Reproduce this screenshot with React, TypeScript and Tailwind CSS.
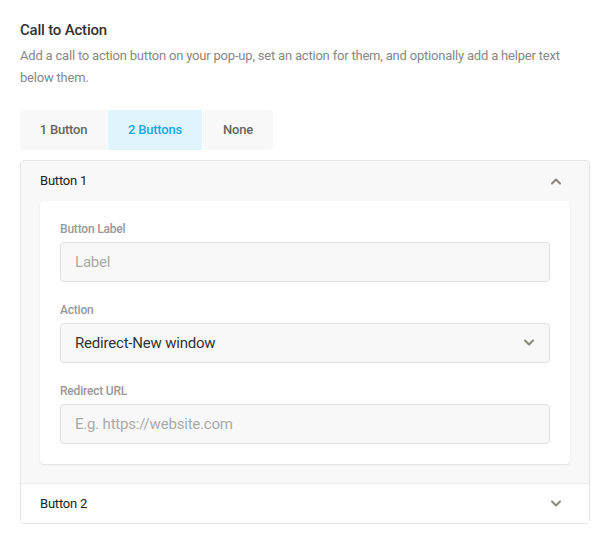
import { useState } from "react";

type Mode = "one" | "two" | "none";

const TABS: { id: Mode; label: string; w: string }[] = [
  { id: "one", label: "1 Button", w: "w-[87px]" },
  { id: "two", label: "2 Buttons", w: "w-[94px]" },
  { id: "none", label: "None", w: "w-[70px]" },
];

function Chevron({ up }: { up?: boolean }) {
  return (
    <svg width="12" height="8" viewBox="0 0 12 8" className="shrink-0">
      <polyline
        points={up ? "2,6.5 6,2.5 10,6.5" : "2,1.5 6,5.5 10,1.5"}
        fill="none"
        stroke="#8b8580"
        strokeWidth="2"
        strokeLinecap="round"
        strokeLinejoin="round"
      />
    </svg>
  );
}

function Field({ label, children }: { label: string; children: React.ReactNode }) {
  return (
    <div className="flex flex-col gap-[5px]">
      <label className="text-[12px] leading-4 font-medium text-[#999]">{label}</label>
      {children}
    </div>
  );
}

const inputCls =
  "h-10 w-full rounded-[4px] border border-[#e0e0e0] bg-[#f8f8f8] px-[14px] text-[15px] tracking-[-0.2px] text-[#333] placeholder:text-[#aaa] outline-none";

export default function App() {
  const [mode, setMode] = useState<Mode>("two");
  const [open, setOpen] = useState(1);

  return (
    <div className="min-h-[546px] bg-white px-5 pt-[19px] font-['Roboto',sans-serif] tracking-[-0.2px]">
      <h2 className="text-[15px] leading-[22px] font-medium text-[#333]">Call to Action</h2>
      <p className="mt-[4px] text-[13px] leading-[22px] text-[#888]">
        Add a call to action button on your pop-up, set an action for them, and optionally add a helper text
        below them.
      </p>

      <div className="mt-[21px] flex w-fit gap-px overflow-hidden rounded-[4px]">
        {TABS.map((t) => (
          <button
            key={t.id}
            type="button"
            onClick={() => setMode(t.id)}
            className={
              "h-10 text-[13px] font-medium " +
              t.w +
              " " +
              (mode === t.id ? "bg-[#e1f5fe] text-[#17a8e3]" : "bg-[#f8f8f8] text-[#666]")
            }
          >
            {t.label}
          </button>
        ))}
      </div>

      <div className="mt-[10px] overflow-hidden rounded-[4px] border border-[#e6e6e6]">
        <div className="bg-[#f8f8f8]">
          <button
            type="button"
            onClick={() => setOpen(open === 1 ? 0 : 1)}
            className="flex h-10 w-full items-center justify-between pl-[19px] pr-[27px] text-[13px] text-[#222]"
          >
            Button 1
            <Chevron up={open === 1} />
          </button>
          {open === 1 && (
            <div className="px-[19px] pb-[19px]">
              <div className="flex flex-col gap-5 rounded-[4px] bg-white p-5 shadow-[0_1px_2px_rgba(0,0,0,0.1)]">
                <Field label="Button Label">
                  <input className={inputCls} placeholder="Label" />
                </Field>
                <Field label="Action">
                  <div className={inputCls + " flex items-center justify-between pr-[14px]"}>
                    <span>Redirect-New window</span>
                    <Chevron />
                  </div>
                </Field>
                <Field label="Redirect URL">
                  <input className={inputCls} placeholder="E.g. https://website.com" />
                </Field>
              </div>
            </div>
          )}
        </div>
        <button
          type="button"
          onClick={() => setOpen(open === 2 ? 0 : 2)}
          className="flex h-10 w-full items-center justify-between border-t border-[#ebebeb] bg-white pl-[19px] pr-[27px] text-[13px] text-[#222]"
        >
          Button 2
          <Chevron up={open === 2} />
        </button>
      </div>
    </div>
  );
}
